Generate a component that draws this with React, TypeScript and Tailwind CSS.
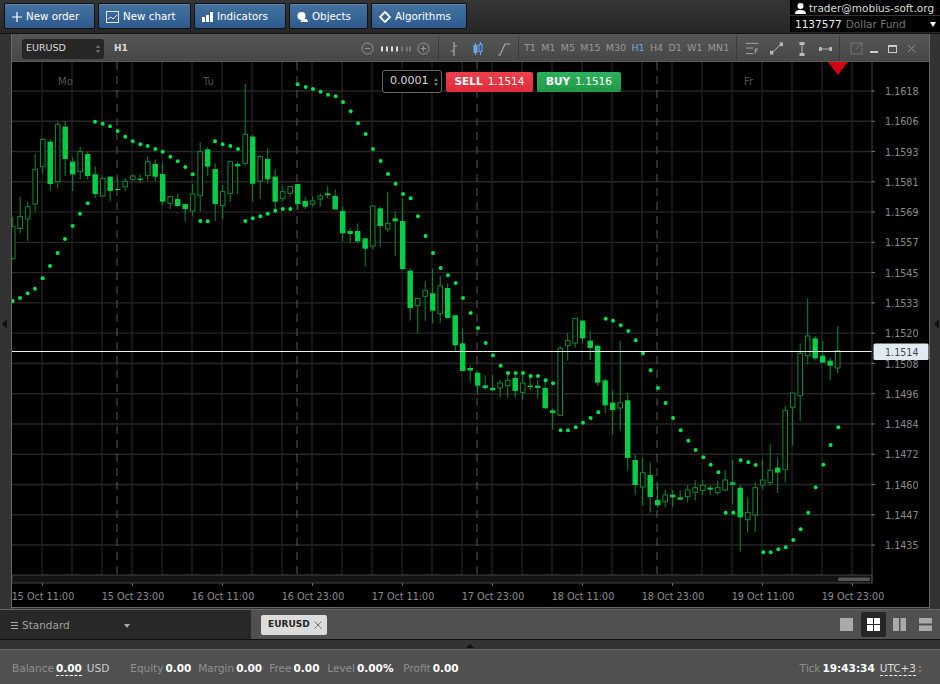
import type { ReactNode } from "react";

type Raw = [number, number, number, number, number];

// wick top, body top, body bottom, wick bottom, filled (read off the chart, 3x scale)
const seg1: Raw[] = [
  [470, 500, 596, 600, 0], [410, 470, 505, 520, 0], [425, 440, 477, 543, 0], [283, 328, 432, 455, 0], [235, 238, 320, 340, 0],
  [238, 245, 372, 393, 1], [185, 193, 365, 385, 0], [183, 200, 297, 348, 1], [290, 305, 343, 393, 1], [260, 275, 335, 358, 0],
  [275, 282, 348, 358, 1], [320, 343, 402, 415, 1], [350, 355, 408, 410, 0], [348, 350, 393, 425, 1], [355, 387, 390, 392, 1],
  [355, 364, 380, 393, 0], [343, 348, 358, 362, 0], [343, 356, 360, 370, 1], [290, 305, 347, 362, 0], [298, 312, 350, 362, 1],
  [310, 342, 425, 438, 1], [408, 410, 430, 447, 0], [400, 417, 438, 440, 1], [432, 432, 447, 484, 1], [372, 402, 453, 470, 0],
  [247, 275, 407, 455, 0], [262, 268, 320, 348, 1], [310, 327, 432, 483, 1], [375, 395, 437, 478, 0], [303, 305, 400, 425, 0],
  [305, 312, 319, 402, 1], [72, 223, 310, 317, 0], [225, 230, 371, 425, 1], [285, 290, 363, 417, 0], [265, 297, 358, 372, 1],
  [328, 350, 425, 450, 1], [378, 395, 415, 425, 0], [378, 380, 400, 410, 0], [372, 372, 432, 450, 1],
];
const seg2: Raw[] = [
  [50, 63, 80, 88, 1], [48, 63, 72, 80, 0], [40, 48, 57, 80, 0], [18, 40, 46, 55, 1], [28, 48, 88, 88, 1],
  [80, 93, 160, 185, 1], [145, 153, 162, 190, 1], [130, 153, 184, 190, 1], [175, 175, 206, 260, 1], [78, 78, 198, 208, 0],
  [80, 85, 138, 200, 1], [35, 130, 147, 155, 0], [95, 115, 124, 228, 1], [57, 123, 267, 273, 1], [265, 272, 384, 422, 1],
  [355, 355, 377, 460, 0], [303, 332, 349, 422, 0], [265, 340, 392, 430, 1], [288, 317, 401, 430, 0], [310, 324, 414, 415, 1],
  [406, 406, 496, 517, 1],
];
const seg3: Raw[] = [
  [85, 130, 213, 213, 1], [195, 204, 212, 248, 1], [218, 218, 257, 285, 1], [225, 256, 264, 270, 1], [225, 264, 271, 272, 1],
  [240, 249, 264, 292, 0], [220, 241, 257, 293, 0], [220, 234, 273, 293, 1], [220, 249, 277, 301, 0], [225, 257, 261, 270, 1],
  [240, 257, 264, 293, 1], [240, 264, 325, 325, 1], [325, 331, 339, 390, 1], [137, 145, 346, 347, 0], [100, 122, 137, 182, 0],
  [55, 55, 129, 143, 0], [60, 62, 115, 130, 1], [92, 122, 144, 180, 1], [137, 137, 248, 258, 1], [235, 241, 316, 340, 1],
  [270, 308, 330, 405, 1], [122, 308, 324, 390, 0], [280, 301, 474, 512, 1], [465, 480, 555, 585, 1], [475, 518, 561, 617, 0],
  [488, 525, 591, 638, 1], [553, 600, 616, 622, 1], [570, 585, 605, 622, 0], [570, 584, 592, 622, 1],
];
const seg4: Raw[] = [
  [600, 622, 629, 630, 1], [585, 600, 620, 637, 0], [571, 593, 607, 632, 0], [570, 586, 601, 615, 0], [585, 593, 599, 615, 1],
  [572, 593, 608, 615, 0], [541, 570, 600, 602, 0], [510, 577, 584, 643, 1], [585, 593, 682, 787, 1], [622, 667, 689, 727, 0],
  [577, 593, 675, 727, 0], [508, 570, 585, 598, 0], [460, 541, 578, 587, 0], [503, 533, 548, 609, 1], [347, 361, 539, 578, 0],
  [309, 309, 352, 466, 0], [160, 190, 317, 392, 0], [25, 138, 197, 222, 0], [138, 145, 205, 212, 1], [153, 197, 218, 220, 1],
  [204, 212, 227, 269, 1], [108, 182, 234, 249, 0],
];

const candles = [
  ...seg1.map((c) => c.map((v, i) => (i < 4 ? 60 + v / 3 : v))),
  ...seg2.map((c) => c.map((v, i) => (i < 4 ? 180 + v / 3 : v))),
  ...seg3.map((c) => c.map((v, i) => (i < 4 ? 300 + v / 3 : v))),
  ...seg4.map((c) => c.map((v, i) => (i < 4 ? 290 + v / 3 : v))),
];

const toDots = (ox: number, oy: number, list: number[][]) => list.map(([x, y]) => [ox + x / 3, oy + y / 3]);

const dots = [
  ...toDots(0, 110, [[38, 573], [60, 564], [83, 550], [105, 536], [128, 505], [150, 468], [173, 429], [195, 387], [218, 348], [240, 311], [263, 280]]),
  ...toDots(0, 60, [[285, 185], [308, 191], [330, 199], [353, 213], [376, 230], [398, 244], [421, 253], [443, 258], [466, 267], [488, 275], [511, 290], [533, 304], [556, 321], [578, 343], [601, 483], [623, 484], [645, 244], [668, 253], [691, 258], [714, 267], [736, 483], [758, 475], [781, 469], [803, 461], [826, 452], [848, 447], [871, 447], [893, 73]]),
  ...toDots(300, 70, [[17, 51], [39, 57], [62, 65], [84, 74], [107, 79], [129, 96], [152, 124], [174, 160], [197, 192], [219, 237], [242, 273], [264, 312], [287, 341], [309, 372], [332, 385]]),
  ...toDots(300, 180, [[354, 109], [377, 168], [399, 219], [422, 264], [444, 286], [467, 309], [489, 354]]),
  ...toDots(430, 300, [[122, 39], [144, 84], [167, 129], [189, 166], [212, 197], [234, 219], [257, 219], [279, 219], [302, 228], [324, 228], [347, 241], [369, 250], [392, 391], [414, 391], [437, 382], [459, 368], [482, 354], [505, 337]]),
  ...toDots(600, 290, [[17, 86], [39, 92], [62, 106], [85, 123], [107, 151], [129, 190], [152, 241], [174, 294], [197, 339], [219, 384], [242, 421], [265, 452], [287, 480], [310, 502], [332, 524], [355, 547], [377, 668], [400, 668], [422, 511], [445, 517], [467, 525], [490, 787], [512, 787], [535, 778], [557, 772], [580, 750], [602, 718], [625, 668], [647, 592], [670, 524], [692, 465], [715, 412]]),
];

const prices = ["1.1618", "1.1606", "1.1593", "1.1581", "1.1569", "1.1557", "1.1545", "1.1533", "1.1520", "1.1508", "1.1496", "1.1484", "1.1472", "1.1460", "1.1447", "1.1435"];
const times = ["15 Oct 11:00", "15 Oct 23:00", "16 Oct 11:00", "16 Oct 23:00", "17 Oct 11:00", "17 Oct 23:00", "18 Oct 11:00", "18 Oct 23:00", "19 Oct 11:00", "19 Oct 23:00"];
const frames = ["T1", "M1", "M5", "M15", "M30", "H1", "H4", "D1", "W1", "MN1"];

function TopButton({ icon, label, width }: { icon: ReactNode; label: string; width: string }) {
  return (
    <button className={`${width} h-[26px] flex items-center gap-[4px] pl-[7px] pt-[2px] rounded-[2px] border border-[#111] bg-linear-to-b from-[#44729f] to-[#2d5a8e] text-[10.3px] text-white shadow-[inset_0_1px_0_#5f88b0]`}>
      {icon}
      <span>{label}</span>
    </button>
  );
}

function Spinner() {
  return (
    <span className="flex flex-col gap-[2px]">
      <span className="w-0 h-0 border-x-[2.5px] border-x-transparent border-b-[3px] border-b-[#777]" />
      <span className="w-0 h-0 border-x-[2.5px] border-x-transparent border-t-[3px] border-t-[#777]" />
    </span>
  );
}

function Chart() {
  const vLines = Array.from({ length: 28 }, (_, i) => 42 + i * 30);
  const hLines = prices.map((_, i) => 91 + i * 30.27);
  return (
    <svg viewBox="12 62 917 546" className="block w-[917px] h-[546px] bg-black">
      {vLines.map((x) => (
        <line key={x} x1={x} x2={x} y1={62} y2={575} stroke="#262626" strokeWidth={1.2} />
      ))}
      {hLines.map((y) => (
        <line key={y} x1={12} x2={872} y1={y} y2={y} stroke="#262626" strokeWidth={1.4} />
      ))}
      {[117, 297, 477, 657].map((x) => (
        <line key={x} x1={x} x2={x} y1={62} y2={575} stroke="#5a5a5a" strokeWidth={1} strokeDasharray="8 6" />
      ))}
      <text x={58} y={85} fontSize={10} fill="#555">Mo</text>
      <text x={203} y={85} fontSize={10} fill="#555">Tu</text>
      <text x={744} y={85} fontSize={10} fill="#555">Fr</text>

      {candles.map(([wt, bt, bb, wb, filled], i) => {
        const x = 12.7 + i * 7.5;
        return (
          <g key={i}>
            <line x1={x} x2={x} y1={wt} y2={wb} stroke="#0a8c35" strokeWidth={1} />
            {filled ? (
              <rect x={x - 2.7} y={bt} width={5.4} height={bb - bt} fill="#00cf45" />
            ) : (
              <rect x={x - 2.3} y={bt} width={4.6} height={bb - bt} fill="#000" stroke="#0a8c35" strokeWidth={1} />
            )}
          </g>
        );
      })}
      {dots.map(([x, y], i) => (
        <circle key={i} cx={x} cy={y} r={2} fill="#00e64d" />
      ))}

      <line x1={12} x2={872} y1={351.5} y2={351.5} stroke="#eeeeee" strokeWidth={1.2} />
      <polygon points="828,62 848,62 838,75" fill="#d0000f" />

      <rect x={12} y={575} width={860} height={8} fill="#141414" stroke="#444" strokeWidth={1} />
      <rect x={838} y={577.5} width={32} height={3.5} rx={1.5} fill="#555" />
      <line x1={872} x2={872} y1={62} y2={583} stroke="#444" strokeWidth={1} />
      <line x1={12} x2={929} y1={607.5} y2={607.5} stroke="#666" strokeWidth={1} />

      {hLines.map((y, i) => (
        <g key={y}>
          <line x1={872} x2={875} y1={y} y2={y} stroke="#777" />
          {i !== 9 && (
            <text x={885} y={y + 4} fontSize={9.6} fill="#8c8c8c">{prices[i]}</text>
          )}
        </g>
      ))}
      <text x={885} y={368} fontSize={9.6} fill="#8c8c8c">{prices[9]}</text>
      <rect x={873.5} y={343.5} width={55} height={16.5} rx={1.5} fill="#dfecf2" />
      <text x={885} y={355.5} fontSize={9.6} fill="#445">1.1514</text>

      {times.map((t, i) => (
        <g key={t}>
          <line x1={42.5 + i * 90} x2={42.5 + i * 90} y1={583} y2={586} stroke="#666" />
          <text x={43 + i * 90} y={600} fontSize={9.6} fill="#8c8c8c" textAnchor="middle">{t}</text>
        </g>
      ))}
    </svg>
  );
}

function LayoutIcon({ kind }: { kind: "one" | "four" | "cols" | "rows" }) {
  const fill = kind === "four" ? "#fff" : "#aaa";
  return (
    <svg width="13" height="13" viewBox="0 0 13 13" fill={fill}>
      {kind === "one" && <rect width="13" height="13" />}
      {kind === "four" && (
        <>
          <rect width="6" height="6" />
          <rect x="7" width="6" height="6" />
          <rect y="7" width="6" height="6" />
          <rect x="7" y="7" width="6" height="6" />
        </>
      )}
      {kind === "cols" && (
        <>
          <rect width="6" height="13" />
          <rect x="7.5" width="5.5" height="13" />
        </>
      )}
      {kind === "rows" && (
        <>
          <rect width="13" height="5.5" />
          <rect y="7.5" width="13" height="5.5" />
        </>
      )}
    </svg>
  );
}

function Stat({ label, value, width }: { label: string; value: string; width: string }) {
  return (
    <span className={`${width} flex gap-[2px] items-baseline`}>
      <span className="text-[#8f8f8f]">{label}</span>
      <span className="font-bold text-white">{value}</span>
    </span>
  );
}

export default function App() {
  return (
    <div className="w-[940px] h-[684px] overflow-hidden flex flex-col bg-[#2e2e2e] font-['DejaVu_Sans',sans-serif] text-[11px]">
      {/* top bar */}
      <div className="h-[34px] flex justify-between bg-linear-to-b from-[#353535] to-[#272727] border-b border-[#111]">
        <div className="flex gap-[3px] pl-[4px] pt-[3px]">
          <TopButton
            width="w-[91px]"
            label="New order"
            icon={
              <svg width="10" height="10" viewBox="0 0 10 10" stroke="#fff" strokeWidth="1.2">
                <path d="M5 0v10M0 5h10" />
              </svg>
            }
          />
          <TopButton
            width="w-[93px]"
            label="New chart"
            icon={
              <svg width="13" height="12" viewBox="0 0 13 12" fill="none" stroke="#dfe8f2" strokeWidth="1">
                <rect x="0.5" y="0.5" width="12" height="11" />
                <path d="M2 8l3-2 2 2 4-4" />
              </svg>
            }
          />
          <TopButton
            width="w-[92px]"
            label="Indicators"
            icon={
              <svg width="11" height="10" viewBox="0 0 11 10" fill="#fff">
                <rect y="5" width="3" height="5" />
                <rect x="4" y="3" width="3" height="7" />
                <rect x="8" width="3" height="10" />
              </svg>
            }
          />
          <TopButton
            width="w-[79px]"
            label="Objects"
            icon={
              <svg width="11" height="11" viewBox="0 0 11 11" fill="#fff">
                <circle cx="4.5" cy="4" r="4" />
                <path d="M3 10l3-3h4l1 3z" />
              </svg>
            }
          />
          <TopButton
            width="w-[96px]"
            label="Algorithms"
            icon={
              <svg width="12" height="12" viewBox="0 0 12 12" fill="none" stroke="#fff" strokeWidth="1.8">
                <path d="M6 1l5 5-5 5-5-5z" />
              </svg>
            }
          />
        </div>
        <div className="w-[150px] h-[32px] bg-black flex flex-col text-[10.5px]">
          <div className="h-[16px] flex items-center gap-[3px] pl-[5px] pt-[2px] text-[#dddddd] border-b border-[#333]">
            <svg width="11" height="11" viewBox="0 0 11 11" fill="#fff">
              <circle cx="5.5" cy="3" r="3" />
              <path d="M0 11c0-3 2-4 5.5-4s5.5 1 5.5 4z" />
            </svg>
            <span>trader@mobius-soft.org</span>
          </div>
          <div className="flex-1 flex items-center pl-[5px] pr-[4px] pt-[1px]">
            <span className="text-[#eeeeee]">1137577</span>
            <span className="ml-[4px] text-[#777]">Dollar Fund</span>
            <span className="ml-auto w-0 h-0 border-x-[3.5px] border-x-transparent border-t-[5px] border-t-white" />
          </div>
        </div>
      </div>

      {/* chart window */}
      <div className="h-[575px] flex">
        <div className="w-[11px] flex items-center justify-start pt-[4px] bg-[#333]">
          <span className="w-0 h-0 border-y-[5px] border-y-transparent border-r-[5px] border-r-[#111] ml-[2px]" />
        </div>
        <div className="w-[918px] flex flex-col border-l border-[#666]">
          <div className="h-[28px] flex pt-[2px] border-b border-[#5a5a5a] bg-linear-to-b from-[#565656] to-[#474747] text-[9.5px] text-[#999]">
            <div className="w-[427px] flex items-center pl-[10px] pr-[8px] border-r border-[#3c3c3c]">
              <div className="w-[82px] h-[20px] flex items-center justify-between px-[4px] rounded-[3px] bg-[#262626] text-[#ddd]">
                <span>EURUSD</span>
                <Spinner />
              </div>
              <span className="ml-[10px] font-bold text-[9px] text-[#ddd]">H1</span>
              <div className="ml-auto flex items-center">
                <svg width="13" height="13" viewBox="0 0 14 14" fill="none" stroke="#999">
                  <circle cx="7" cy="7" r="6" />
                  <path d="M4 7h6" />
                </svg>
                <svg width="30" height="6" viewBox="0 0 30 6" className="ml-[7px] mr-[6px]">
                  {[0, 5, 10, 15, 20, 25, 28].map((x, i) => (
                    <rect key={x} x={x} y="0.5" width="2" height="5" fill={i < 4 ? "#ddd" : "#777"} />
                  ))}
                </svg>
                <svg width="13" height="13" viewBox="0 0 14 14" fill="none" stroke="#999">
                  <circle cx="7" cy="7" r="6" />
                  <path d="M4 7h6M7 4v6" />
                </svg>
              </div>
            </div>
            <div className="w-[80px] flex items-center gap-[14px] pl-[10px] border-r border-[#3c3c3c]">
              <svg width="10" height="14" viewBox="0 0 10 14" fill="none" stroke="#aaa" strokeWidth="1.2">
                <path d="M5 0v14M5 4h3M2 9h3" />
              </svg>
              <svg width="10" height="14" viewBox="0 0 10 14" fill="#6ea8e0" stroke="#6ea8e0">
                <path d="M2.5 1v12M7.5 0v13" />
                <rect x="1" y="3.5" width="3" height="7" />
                <rect x="6" y="2.5" width="3" height="7" fill="#2c5a8c" />
              </svg>
              <svg width="14" height="14" viewBox="0 0 14 14" fill="none" stroke="#aaa" strokeWidth="1.2">
                <path d="M1 13h2L8 2h5" />
              </svg>
            </div>
            <div className="w-[218px] flex items-center gap-[5.3px] pl-[5px] border-r border-[#3c3c3c]">
              {frames.map((f) => (
                <span key={f} className={f === "H1" ? "text-[#6ea8e0]" : ""}>{f}</span>
              ))}
            </div>
            <div className="w-[103px] flex items-center pl-[8px] border-r border-[#3c3c3c]">
              <svg width="14" height="13" viewBox="0 0 15 13" fill="none" stroke="#aaa" strokeWidth="1">
                <path d="M1 1h13M1 6h8M1 12h8M11 7h3M11 7v5M11 9h2" />
              </svg>
              <svg width="13" height="13" viewBox="0 0 14 14" fill="#bbb" stroke="#bbb" className="ml-[11px]">
                <path d="M2 12L12 2" />
                <rect x="0" y="10" width="3" height="3" />
                <rect x="11" y="1" width="3" height="3" />
              </svg>
              <svg width="6" height="14" viewBox="0 0 6 14" fill="#bbb" stroke="#bbb" className="ml-[16px]">
                <path d="M3 1v12" />
                <rect x="1" y="0" width="4" height="2.5" />
                <rect x="1" y="11.5" width="4" height="2.5" />
              </svg>
              <svg width="13" height="6" viewBox="0 0 14 6" fill="#bbb" stroke="#bbb" className="ml-[14px]">
                <path d="M1 3h12" />
                <rect x="0" y="1.5" width="2.5" height="3" />
                <rect x="11.5" y="1.5" width="2.5" height="3" />
              </svg>
            </div>
            <div className="flex-1 flex items-center pl-[10px]">
              <svg width="13" height="13" viewBox="0 0 13 13" fill="none" stroke="#777">
                <path d="M8 1H1v11h11V6M6 7l6-6M8 1h4v4" />
              </svg>
              <span className="ml-[7px] mt-[7px] w-[8px] h-[2px] bg-[#ccc]" />
              <span className="ml-[10px] w-[9px] h-[8px] border border-t-2 border-[#ccc]" />
              <svg width="9" height="9" viewBox="0 0 10 10" stroke="#999" className="ml-[10px]">
                <path d="M1 1l8 8M9 1l-8 8" />
              </svg>
            </div>
          </div>
          <div className="relative">
            <Chart />
            <div className="absolute left-[370px] top-[8px] flex items-center text-[10.5px]">
              <div className="w-[60px] h-[23px] flex items-center justify-between pl-[7px] pr-[3px] rounded-[3px] border border-[#666] bg-black text-[#ddd] text-[11px]">
                <span>0.0001</span>
                <Spinner />
              </div>
              <div className="ml-[4px] w-[87px] h-[20px] flex items-center justify-center gap-[5px] rounded-[2px] bg-linear-to-b from-[#f0404c] to-[#dd2c3a] text-white">
                <span className="font-bold">SELL</span>
                <span>1.1514</span>
              </div>
              <div className="ml-[4px] w-[84px] h-[20px] flex items-center justify-center gap-[5px] rounded-[2px] bg-linear-to-b from-[#2eb05c] to-[#1d9a49] text-white">
                <span className="font-bold">BUY</span>
                <span>1.1516</span>
              </div>
            </div>
          </div>
        </div>
        <div className="flex-1 flex items-center justify-end pt-[4px] bg-[#333] border-l border-[#666]">
          <span className="w-0 h-0 border-y-[5px] border-y-transparent border-r-[5px] border-r-[#111] mr-[1px]" />
        </div>
      </div>

      {/* tab bar */}
      <div className="h-[30px] flex border-t border-[#666]">
        <div className="w-[251px] flex items-center pl-[11px] pr-[121px] pt-[2px] bg-[#282828] text-[10.5px] text-[#a0a0a0]">
          <span className="flex flex-col gap-[1.5px] w-[7px]">
            <span className="h-[1.5px] bg-[#aaa]" />
            <span className="h-[1.5px] bg-[#aaa]" />
            <span className="h-[1.5px] bg-[#aaa]" />
          </span>
          <span className="ml-[4px]">Standard</span>
          <span className="ml-auto w-0 h-0 border-x-[3.5px] border-x-transparent border-t-[4px] border-t-[#aaa]" />
        </div>
        <div className="flex-1 flex items-center pl-[10px] bg-[#505050]">
          <div className="w-[66px] h-[20px] flex items-center justify-between pl-[7px] pr-[5px] rounded-[2px] bg-[#dcdcdc] text-[#222] text-[9px] font-bold">
            <span>EURUSD</span>
            <svg width="8" height="8" viewBox="0 0 8 8" stroke="#777">
              <path d="M0.5 0.5l7 7M7.5 0.5l-7 7" />
            </svg>
          </div>
          <div className="ml-auto flex items-center pr-[8px]">
            <LayoutIcon kind="one" />
            <span className="ml-[8px] w-[25px] h-[25px] flex items-center justify-center rounded-[2px] bg-[#262626]">
              <LayoutIcon kind="four" />
            </span>
            <span className="ml-[7px]"><LayoutIcon kind="cols" /></span>
            <span className="ml-[13px]"><LayoutIcon kind="rows" /></span>
          </div>
        </div>
      </div>

      <div className="h-[10px] flex items-end justify-center bg-[#333] border-t border-[#111]">
        <span className="w-0 h-0 mb-[1px] border-x-[4px] border-x-transparent border-b-[4px] border-b-[#111]" />
      </div>

      {/* status bar */}
      <div className="flex-1 flex items-center pl-[12px] pr-[18px] pt-[4px] bg-[#505050] border-t border-[#666] text-[10.5px]">
        <span className="text-[#8f8f8f]">Balance</span>
        <span className="ml-[2px] font-bold text-white border-b border-dashed border-white leading-[13px]">0.00</span>
        <span className="ml-[5px] text-[#ccc]">USD</span>
        <div className="ml-[21px] flex">
          <Stat width="w-[68px]" label="Equity" value="0.00" />
          <Stat width="w-[71px]" label="Margin" value="0.00" />
          <Stat width="w-[58px]" label="Free" value="0.00" />
          <Stat width="w-[76px]" label="Level" value="0.00%" />
          <Stat width="w-[58px]" label="Profit" value="0.00" />
        </div>
        <div className="ml-auto flex items-center">
          <span className="text-[#8f8f8f]">Tick</span>
          <span className="ml-[2px] font-bold text-white">19:43:34</span>
          <span className="ml-[5px] text-[#ddd] border-b border-dashed border-white leading-[13px]">UTC+3</span>
          <span className="ml-[2px]"><Spinner /></span>
        </div>
      </div>
    </div>
  );
}
